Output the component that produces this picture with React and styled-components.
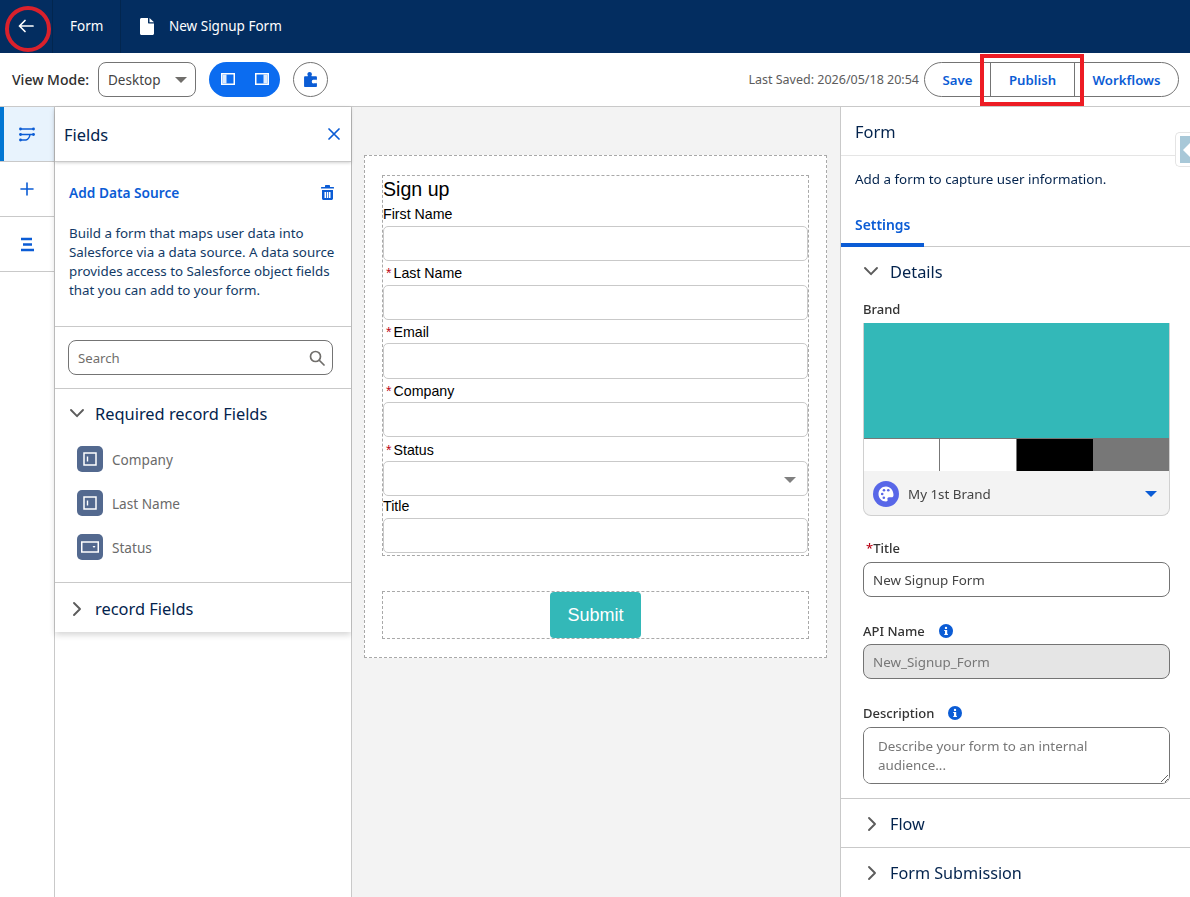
import styled, { createGlobalStyle } from "styled-components";

const UI = `"Noto Sans", "Open Sans", sans-serif`;
const FORM = `"Liberation Sans", Arial, sans-serif`;
const BLUE = "#0b5cd5";
const NAVY = "#03234d";
const LINE = "#c9c9c9";
const TEAL = "#33b8b8";

const Global = createGlobalStyle`
  html, body { margin: 0; padding: 0; height: 100%; overflow: hidden; background: #fff; }
  body { font-family: ${UI}; color: ${NAVY}; }
  * { box-sizing: border-box; }
`;

const Page = styled.div`
  position: relative;
  width: 1190px;
  height: 897px;
  display: flex;
  flex-direction: column;
  overflow: hidden;
`;

const Header = styled.header`
  height: 53px;
  background: #032d60;
  display: flex;
  align-items: stretch;
  color: #fff;
  font-size: 13.5px;
`;
const HeaderCell = styled.div`
  display: flex;
  align-items: center;
  justify-content: ${(p) => (p.$center ? "center" : "flex-start")};
  gap: 15px;
  width: ${(p) => p.$width || "auto"};
  padding-left: ${(p) => p.$pad || 0};
  padding-bottom: 1px;
  border-right: ${(p) => (p.$divide ? "1px solid #02264f" : "none")};
`;

const Toolbar = styled.div`
  height: 54px;
  display: flex;
  align-items: center;
  padding: 0 11px 1px 12px;
  border-bottom: 1px solid ${LINE};
`;
const ViewLabel = styled.span`
  width: 77px;
  font-size: 14px;
  font-weight: 500;
  color: #2e2e2e;
  margin-right: 9px;
  white-space: nowrap;
  padding-top: 1px;
`;
const ViewSelect = styled.div`
  width: 98px;
  height: 35px;
  border: 1px solid #747474;
  border-radius: 8px;
  display: flex;
  align-items: center;
  justify-content: space-between;
  padding: 1px 8px 0 9px;
  font-size: 13.5px;
  color: #444;
`;
const Caret = styled.span`
  display: block;
  width: 0;
  height: 0;
  border-left: ${(p) => p.$size || 6}px solid transparent;
  border-right: ${(p) => p.$size || 6}px solid transparent;
  border-top: ${(p) => p.$size || 6}px solid ${(p) => p.$color || "#706e6b"};
  margin-left: ${(p) => (p.$push ? "auto" : "0")};
`;
const LayoutToggle = styled.div`
  width: 71px;
  height: 35px;
  margin-left: 13px;
  border-radius: 18px;
  background: #0b6cf0;
  display: flex;
  align-items: center;
  justify-content: space-between;
  padding: 0 11px 0 12px;
`;
const CircleButton = styled.div`
  width: 35px;
  height: 35px;
  margin-left: 13px;
  border: 1px solid #747474;
  border-radius: 50%;
  display: flex;
  align-items: center;
  justify-content: center;
`;
const Saved = styled.span`
  margin-left: auto;
  margin-right: 5px;
  padding-top: 1px;
  font-size: 12.5px;
  color: #5c5c5c;
`;
const ButtonGroup = styled.div`
  display: flex;
  height: 35px;
  border: 1px solid #747474;
  border-radius: 18px;
  width: 255px;
`;
const GroupButton = styled.div`
  width: ${(p) => p.$width}px;
  display: flex;
  align-items: center;
  justify-content: center;
  padding-top: 1px;
  font-size: 13.2px;
  font-weight: 600;
  color: ${BLUE};
  border-left: ${(p) => (p.$divide ? "1px solid #747474" : "none")};
`;

const Body = styled.div`
  flex: 1;
  display: flex;
  min-height: 0;
`;

const Rail = styled.nav`
  width: 55px;
  border-right: 1px solid ${LINE};
  display: flex;
  flex-direction: column;
`;
const RailItem = styled.div`
  height: 55px;
  display: flex;
  align-items: center;
  justify-content: center;
  border-bottom: 1px solid ${LINE};
  background: ${(p) => (p.$active ? "#e8f3fd" : "#fff")};
  box-shadow: ${(p) => (p.$active ? "inset 4px 0 0 #0176d3" : "none")};
`;

const FieldsPanel = styled.aside`
  width: 297px;
  border-right: 1px solid ${LINE};
  display: flex;
  flex-direction: column;
`;
const FieldsCard = styled.div`
  box-shadow: 0 3px 6px rgba(0, 0, 0, 0.16);
`;
const PanelHead = styled.div`
  height: 55px;
  display: flex;
  align-items: center;
  justify-content: space-between;
  padding: 0 11px 0 9px;
  font-size: 16.4px;
  border-bottom: 1px solid ${LINE};
  box-shadow: 0 1px 3px rgba(0, 0, 0, 0.18);
  position: relative;
`;
const SourceBlock = styled.div`
  height: 165px;
  padding: 20px 17px 0 14px;
  border-bottom: 1px solid ${LINE};
`;
const SourceTitle = styled.div`
  display: flex;
  align-items: center;
  justify-content: space-between;
  font-size: 13.7px;
  font-weight: 600;
  color: ${BLUE};
  height: 20px;
`;
const SourceText = styled.p`
  margin: 22px 0 0;
  font-size: 13.35px;
  line-height: 19px;
  color: #123a66;
  white-space: nowrap;
`;
const SearchBlock = styled.div`
  height: 62px;
  padding: 13px 18px 0 13px;
  border-bottom: 1px solid ${LINE};
`;
const SearchBox = styled.div`
  height: 35px;
  border: 1px solid #747474;
  border-radius: 8px;
  display: flex;
  align-items: center;
  justify-content: space-between;
  padding: 1px 7px 0 9px;
  font-size: 13.2px;
  color: #706e6b;
`;
const Section = styled.div`
  border-bottom: ${(p) => (p.$last ? "none" : `1px solid ${LINE}`)};
  padding-bottom: ${(p) => p.$bottom || 0}px;
`;
const SectionHead = styled.div`
  display: flex;
  align-items: center;
  height: ${(p) => p.$height || 50}px;
  padding-left: 14px;
  padding-top: ${(p) => p.$down || 0}px;
  padding-bottom: ${(p) => p.$up || 0}px;
  gap: 10px;
  margin-bottom: ${(p) => p.$after || 0}px;
  font-size: 16.4px;
  color: ${NAVY};
`;
const FieldRow = styled.div`
  display: flex;
  align-items: center;
  gap: 9px;
  height: 26px;
  margin: 0 0 18px 22px;
  font-size: 13.6px;
  color: #6a6a6a;
`;
const FieldIcon = styled.span`
  width: 26px;
  height: 26px;
  border-radius: 5px;
  background: #53698f;
  display: flex;
  align-items: center;
  justify-content: center;
`;

const Canvas = styled.main`
  width: 489px;
  background: #f3f3f3;
  padding: 48px 14px 0 12px;
`;
const FormFrame = styled.div`
  height: 503px;
  background: #fff;
  border: 1px dashed #a9a9a9;
  padding: 19px 17px 0 17px;
  font-family: ${FORM};
  color: #000;
`;
const FormBlock = styled.div`
  height: 381px;
  border: 1px dashed #a9a9a9;
`;
const FormTitle = styled.div`
  font-size: 19.6px;
  line-height: 26px;
`;
const FieldLabel = styled.div`
  font-size: 14.2px;
  line-height: 16px;
  height: ${(p) => p.$height || 23}px;
  padding-top: ${(p) => p.$top || 4}px;
  padding-left: ${(p) => (p.$required ? 3 : 0)}px;
  display: flex;
  gap: 2px;
`;
const Star = styled.span`
  color: #ba0517;
`;
const FormInput = styled.div`
  height: ${(p) => p.$height || 35}px;
  border: 1px solid #c9c9c9;
  border-radius: 5px;
  display: flex;
  align-items: center;
  justify-content: flex-end;
  padding: 2px 11px 0 0;
`;
const SubmitBlock = styled.div`
  height: 48px;
  margin-top: 35px;
  border: 1px dashed #a9a9a9;
  display: flex;
  justify-content: center;
`;
const SubmitButton = styled.button`
  width: 91px;
  height: 46px;
  border: none;
  border-radius: 4px;
  background: ${TEAL};
  color: #fff;
  font-family: ${FORM};
  font-size: 18px;
`;

const Props = styled.aside`
  flex: 1;
  border-left: 1px solid ${LINE};
  margin-left: -1px;
  position: relative;
  background: #fff;
`;
const PropsHead = styled.div`
  height: 49px;
  padding: 13px 14px 0;
  font-size: 16.4px;
  border-bottom: 1px solid #e5e5e5;
`;
const PropsIntro = styled.div`
  height: 48px;
  padding: 14px 14px 0;
  font-size: 13.4px;
  color: ${NAVY};
`;
const Tabs = styled.div`
  height: 43px;
  border-bottom: 1px solid ${LINE};
`;
const Tab = styled.div`
  width: 83px;
  height: 43px;
  padding: 11px 0 0 14px;
  font-size: 13.9px;
  font-weight: 600;
  color: ${BLUE};
  border-bottom: 4px solid ${BLUE};
`;
const Details = styled.div`
  height: 552px;
  border-bottom: 1px solid ${LINE};
  padding: 0 20px 0 22px;
`;
const DetailsHead = styled(SectionHead)`
  height: 50px;
  padding-left: 0;
  padding-bottom: 2px;
  gap: 11px;
  margin-bottom: 2px;
`;
const Label = styled.div`
  display: flex;
  align-items: center;
  gap: ${(p) => p.$gap || 0}px;
  height: 20px;
  margin-top: ${(p) => p.$top || 0}px;
  margin-bottom: ${(p) => p.$bottom || 4}px;
  padding-left: ${(p) => p.$indent || 0}px;
  font-size: 13px;
  font-weight: 500;
  color: #333;
`;
const BrandCard = styled.div`
  height: 193px;
  width: 307px;
  border: 1px solid #d0d0d0;
  border-top: none;
  border-radius: 0 0 8px 8px;
  overflow: hidden;
  background: #f3f3f3;
`;
const BrandHero = styled.div`
  height: 115px;
  background: ${TEAL};
`;
const BrandColors = styled.div`
  height: 33px;
  display: grid;
  grid-template-columns: 76px 77px 76px 1fr;
  border-top: 1px solid #777;
`;
const BrandColor = styled.div`
  background: ${(p) => p.$color};
  border-right: ${(p) => (p.$rule ? "1px solid #777" : "none")};
`;
const BrandFoot = styled.div`
  height: 45px;
  display: flex;
  align-items: center;
  padding: 0 12px 0 9px;
  gap: 9px;
  font-size: 13.4px;
  color: #444;
`;
const TextField = styled.input`
  display: block;
  width: 307px;
  height: 35px;
  padding: 0 9px;
  border: 1px solid #747474;
  border-radius: 8px;
  font-family: ${UI};
  font-size: 13.4px;
  color: ${(p) => (p.disabled ? "#777" : "#444")};
  background: ${(p) => (p.disabled ? "#e5e5e5" : "#fff")};
`;
const TextArea = styled.textarea`
  display: block;
  width: 307px;
  height: 57px;
  padding: 9px 14px;
  border: 1px solid #747474;
  border-radius: 8px;
  font-family: ${UI};
  font-size: 13.4px;
  line-height: 19px;
  &::placeholder { color: #777; }
`;
const Collapsed = styled.div`
  height: 49px;
  border-bottom: ${(p) => (p.$last ? "none" : `1px solid ${LINE}`)};
  display: flex;
  align-items: center;
  padding-left: 23px;
  padding-top: ${(p) => p.$down || 0}px;
  gap: 10px;
  font-size: 16.2px;
`;
const SideTab = styled.div`
  position: absolute;
  top: 25px;
  right: 0;
  width: 15px;
  height: 35px;
  background: #fff;
  border: 1px solid #e4e4e4;
  border-right: none;
  border-radius: 5px 0 0 5px;
  padding: 3px 0 3px 4px;
`;
const SideTabInner = styled.div`
  height: 100%;
  background: #a8c8d8;
  display: flex;
  align-items: center;
  padding-left: 3px;
`;
const SideArrow = styled.span`
  width: 0;
  height: 0;
  border-top: 7px solid transparent;
  border-bottom: 7px solid transparent;
  border-right: 7px solid #fff;
`;

// red markers someone drew on top of the screenshot
const RedCircle = styled.div`
  position: absolute;
  left: 5px;
  top: 6px;
  width: 46px;
  height: 46px;
  border: 4px solid #d9212c;
  border-radius: 50%;
`;
const RedBox = styled.div`
  position: absolute;
  left: 980px;
  top: 54px;
  width: 104px;
  height: 52px;
  border: 4px solid #ed1c24;
`;

const Chevron = ({ open, size = 16 }) => (
  <svg width={size} height={size} viewBox="0 0 16 16" fill="none" stroke="#5c5c5c" strokeWidth="1.9" strokeLinecap="round" strokeLinejoin="round">
    {open ? <path d="M2 5l6 6.2L14 5" /> : <path d="M5 2l6 6-6 6" />}
  </svg>
);

const PanelIcon = ({ right }) => (
  <svg width="14" height="12" viewBox="0 0 14 12">
    <rect x="0.75" y="0.75" width="12.5" height="10.5" fill="none" stroke="#fff" strokeWidth="1.5" />
    <rect x={right ? 8.5 : 1.5} y="1.5" width="4" height="9" fill="#dcebff" />
  </svg>
);

const InfoIcon = () => (
  <svg width="14" height="14" viewBox="0 0 14 14">
    <circle cx="7" cy="7" r="7" fill={BLUE} />
    <rect x="6" y="6" width="2.2" height="4.8" fill="#fff" />
    <rect x="5.2" y="6" width="2" height="1" fill="#fff" />
    <rect x="5.2" y="9.9" width="3.8" height="1" fill="#fff" />
    <circle cx="7" cy="3.9" r="1.2" fill="#fff" />
  </svg>
);

const TextIcon = () => (
  <svg width="14" height="14" viewBox="0 0 14 14" fill="none" stroke="#fff">
    <rect x="1" y="1" width="12" height="12" strokeWidth="1.5" />
    <path d="M4.5 4.5v5" strokeWidth="1.4" />
  </svg>
);

const PicklistIcon = () => (
  <svg width="18" height="12" viewBox="0 0 18 12">
    <rect x="0.75" y="1" width="16.5" height="10" fill="none" stroke="#fff" strokeWidth="1.5" />
    <path d="M11.5 5h3l-1.5 2z" fill="#fff" />
  </svg>
);

const requiredFields = [
  { name: "Company", icon: <TextIcon /> },
  { name: "Last Name", icon: <TextIcon /> },
  { name: "Status", icon: <PicklistIcon /> },
];

const formFields = [
  { label: "Last Name", required: true, labelHeight: 24 },
  { label: "Email", required: true, height: 36 },
  { label: "Company", required: true },
  { label: "Status", required: true, select: true, labelHeight: 24, top: 5 },
  { label: "Title", labelHeight: 22, top: 2 },
];

export default function App() {
  return (
    <Page>
      <Global />
      <Header>
        <HeaderCell $width="53px" $center $divide>
          <svg width="16" height="14" viewBox="0 0 16 14" fill="none" stroke="#fff" strokeWidth="1.7" strokeLinecap="round" strokeLinejoin="round">
            <path d="M15 7H1.5M7 1.5L1.5 7 7 12.5" />
          </svg>
        </HeaderCell>
        <HeaderCell $width="68px" $pad="17px" $divide>Form</HeaderCell>
        <HeaderCell $pad="19px">
          <svg width="14" height="17" viewBox="0 0 14 17" fill="#fff">
            <path d="M1.5 0H8v4.5c0 .6.4 1 1 1h5V15.5c0 .8-.7 1.5-1.500 1.500h-11C.7 17 0 16.300 0 15.500V1.500C0 .7.700 0 1.500 0z" />
            <path d="M9.500 0L14 4.300H9.500z" />
          </svg>
          New Signup Form
        </HeaderCell>
      </Header>

      <Toolbar>
        <ViewLabel>View Mode:</ViewLabel>
        <ViewSelect>Desktop <Caret /></ViewSelect>
        <LayoutToggle>
          <PanelIcon />
          <PanelIcon right />
        </LayoutToggle>
        <CircleButton>
          <svg width="13" height="15" viewBox="0 0 12 14" fill={BLUE}>
            <path d="M0 5c0-.5.4-1 1-1h2.200c.4 0 .5-.4.300-.7C3.200 2.900 3.100 2.500 3.100 2 3.100.8 4.100 0 5.200 0s2.100.8 2.100 2c0 .5-.1.900-.4 1.300-.2.300-.1.700.300.700H11c.6 0 1 .5 1 1v8c0 .6-.4 1-1 1H1c-.6 0-1-.4-1-1z" />
            <path d="M12 7.300H9.300a1.700 1.700 0 1 0 0 3.300H12z" fill="#fff" />
          </svg>
        </CircleButton>
        <Saved>Last Saved: 2026/05/18 20:54</Saved>
        <ButtonGroup>
          <GroupButton $width={65}>Save</GroupButton>
          <GroupButton $width={84} $divide>Publish</GroupButton>
          <GroupButton $width={104} $divide>Workflows</GroupButton>
        </ButtonGroup>
      </Toolbar>

      <Body>
        <Rail>
          <RailItem $active>
            <svg width="16" height="15" viewBox="0 0 16 15" fill="none" stroke={BLUE} strokeWidth="1.500" strokeLinecap="round">
              <path d="M1.500 2h13M1.500 7.500h13M1.500 13h5.500M11 7.500c-.5 3-2 5-4 5.500" />
              <g fill={BLUE} stroke="none">
                <circle cx="1.500" cy="2" r="1.400" />
                <circle cx="14.500" cy="2" r="1.400" />
                <circle cx="1.500" cy="7.500" r="1.400" />
                <circle cx="14.500" cy="7.500" r="1.400" />
                <circle cx="1.500" cy="13" r="1.400" />
              </g>
            </svg>
          </RailItem>
          <RailItem>
            <svg width="14" height="14" viewBox="0 0 14 14" stroke={BLUE} strokeWidth="1.600" strokeLinecap="round">
              <path d="M7 1v12M1 7h12" />
            </svg>
          </RailItem>
          <RailItem>
            <svg width="14" height="15" viewBox="0 0 14 15" stroke={BLUE} strokeWidth="2.600">
              <path d="M1 2h11M3 7.500h9M1 13h13" />
            </svg>
          </RailItem>
        </Rail>

        <FieldsPanel>
          <FieldsCard>
            <PanelHead>
              Fields
              <svg width="12" height="12" viewBox="0 0 12 12" stroke={BLUE} strokeWidth="1.700" strokeLinecap="round">
                <path d="M1 1l10 10M11 1L1 11" />
              </svg>
            </PanelHead>
            <SourceBlock>
              <SourceTitle>
                Add Data Source
                <svg width="13" height="15" viewBox="0 0 13 15" fill={BLUE}>
                  <path d="M5 0h3c.6 0 1 .4 1 1v1h3.500c.3 0 .5.200.5.500V3.500H0V2.500C0 2.200.2 2 .5 2H4V1c0-.6.4-1 1-1z" />
                  <path d="M1 5h11v8.500c0 .8-.7 1.500-1.500 1.500h-8C1.700 15 1 14.300 1 13.500zM3.500 7v6h1.500V7zM5.800 7v6h1.500V7zM8 7v6h1.500V7z" fillRule="evenodd" />
                </svg>
              </SourceTitle>
              <SourceText>
                Build a form that maps user data into<br />
                Salesforce via a data source. A data source<br />
                provides access to Salesforce object fields<br />
                that you can add to your form.
              </SourceText>
            </SourceBlock>
            <SearchBlock>
              <SearchBox>
                Search
                <svg width="16" height="16" viewBox="0 0 16 16" fill="none" stroke="#706e6b" strokeWidth="1.700" strokeLinecap="round">
                  <circle cx="6.500" cy="6.500" r="5" />
                  <path d="M10.500 10.500L15 15" />
                </svg>
              </SearchBox>
            </SearchBlock>
            <Section $bottom={4}>
              <SectionHead $after={7} $up={2}><Chevron open />Required record Fields</SectionHead>
              {requiredFields.map((f) => (
                <FieldRow key={f.name}>
                  <FieldIcon>{f.icon}</FieldIcon>
                  {f.name}
                </FieldRow>
              ))}
            </Section>
            <Section $last>
              <SectionHead $height={49} $down={2}><Chevron />record Fields</SectionHead>
            </Section>
          </FieldsCard>
        </FieldsPanel>

        <Canvas>
          <FormFrame>
            <FormBlock>
              <FormTitle>Sign up</FormTitle>
              <FieldLabel $height={24}>First Name</FieldLabel>
              <FormInput />
              {formFields.map((f) => (
                <div key={f.label}>
                  <FieldLabel $required={f.required} $height={f.labelHeight} $top={f.top}>
                    {f.required && <Star>*</Star>}
                    {f.label}
                  </FieldLabel>
                  <FormInput $height={f.height}>
                    {f.select && <Caret $color="#808080" />}
                  </FormInput>
                </div>
              ))}
            </FormBlock>
            <SubmitBlock>
              <SubmitButton>Submit</SubmitButton>
            </SubmitBlock>
          </FormFrame>
        </Canvas>

        <Props>
          <SideTab>
            <SideTabInner><SideArrow /></SideTabInner>
          </SideTab>
          <PropsHead>Form</PropsHead>
          <PropsIntro>Add a form to capture user information.</PropsIntro>
          <Tabs><Tab>Settings</Tab></Tabs>
          <Details>
            <DetailsHead><Chevron open />Details</DetailsHead>
            <Label>Brand</Label>
            <BrandCard>
              <BrandHero />
              <BrandColors>
                <BrandColor $color="#fff" $rule />
                <BrandColor $color="#fff" $rule />
                <BrandColor $color="#000" />
                <BrandColor $color="#777" />
              </BrandColors>
              <BrandFoot>
                <svg width="26" height="26" viewBox="0 0 26 26">
                  <circle cx="13" cy="13" r="13" fill="#5867e8" />
                  <path d="M13 5.500c-4.300 0-7.500 3.300-7.500 7.500s3.300 7.500 7.500 7.500c1.300 0 1.900-.9 1.500-2-.4-1.200.2-2.200 1.500-2.200h2.500c1.300 0 2-.9 2-2.300 0-4.500-3.200-8.500-7.500-8.500z" fill="#fff" />
                  <circle cx="9.200" cy="13" r="1.300" fill="#5867e8" />
                  <circle cx="11" cy="9.300" r="1.300" fill="#5867e8" />
                  <circle cx="15.300" cy="9.300" r="1.300" fill="#5867e8" />
                  <circle cx="10.800" cy="16.800" r="1.300" fill="#5867e8" />
                </svg>
                My 1st Brand
                <Caret $color={BLUE} $push />
              </BrandFoot>
            </BrandCard>
            <Label $top={22} $indent={3}><Star>*</Star>Title</Label>
            <TextField readOnly value="New Signup Form" />
            <Label $top={24} $gap={14} $bottom={3}>API Name <InfoIcon /></Label>
            <TextField disabled value="New_Signup_Form" />
            <Label $top={24} $gap={14}>Description <InfoIcon /></Label>
            <TextArea placeholder="Describe your form to an internal audience..." />
          </Details>
          <Collapsed $down={2}><Chevron />Flow</Collapsed>
          <Collapsed $last><Chevron />Form Submission</Collapsed>
        </Props>
      </Body>

      <RedCircle />
      <RedBox />
    </Page>
  );
}
